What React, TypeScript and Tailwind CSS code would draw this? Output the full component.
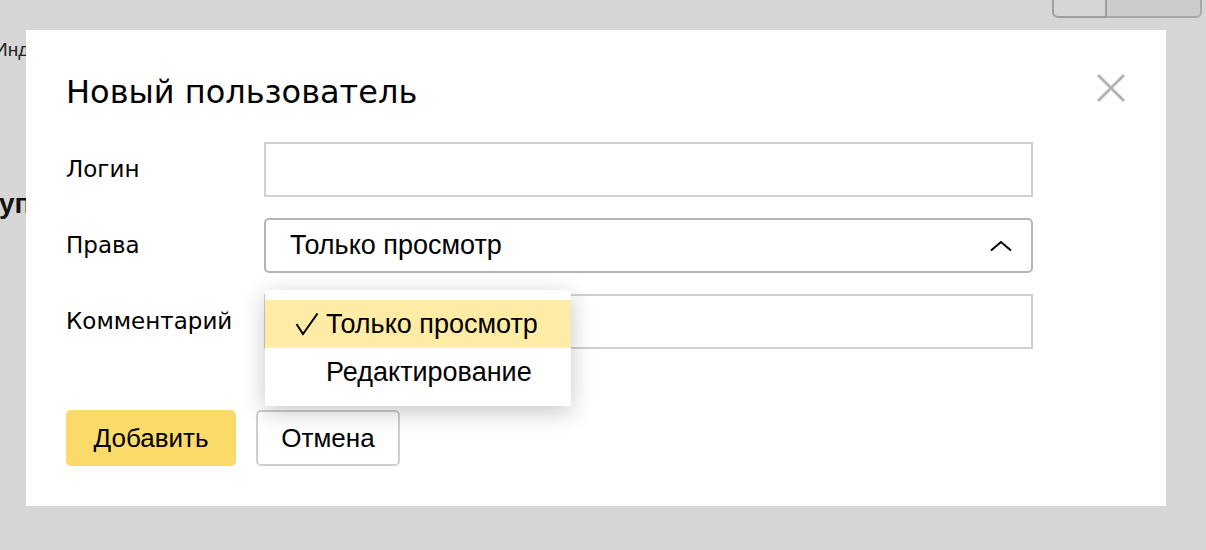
import React from "react";

const label = "w-[198px] shrink-0 text-[23px] text-black font-['DejaVu_Sans',sans-serif]";

function Row({ title, children }: { title: string; children: React.ReactNode }) {
  return (
    <div className="flex items-center h-[55px]">
      <div className={label}>{title}</div>
      <div className="w-[769px] h-full">{children}</div>
    </div>
  );
}

function Background() {
  return (
    <>
      <div className="absolute left-[-6px] top-[36px] text-[19px] text-[#222] font-['Liberation_Sans',sans-serif]">
        Индекс
      </div>
      <div className="absolute left-[-1px] top-[183px] text-[28px] font-semibold text-[#111] font-['Liberation_Sans',sans-serif]">
        уппы
      </div>
      <div className="absolute right-[4px] top-[-6px] flex h-[24px]">
        <div className="w-[55px] rounded-bl-[6px] border-2 border-[#9e9e9e] bg-[#d6d6d6]" />
        <div className="w-[95px] rounded-br-[6px] border-2 border-l-0 border-[#a8a8a8] bg-[#cbcbcb]" />
      </div>
    </>
  );
}

export default function App() {
  return (
    <div className="relative h-[550px] w-[1206px] overflow-hidden bg-[#d6d6d6] font-['Liberation_Sans',sans-serif]">
      <Background />
      <div className="absolute left-[26px] top-[30px] h-[476px] w-[1140px] bg-white pl-[40px] pt-[44px]">
        <button className="absolute right-[40px] top-[43px] h-[30px] w-[30px]">
          <svg viewBox="0 0 30 30" className="h-[30px] w-[30px]">
            <path d="M2 2 L28 28 M28 2 L2 28" stroke="#b3b3b3" strokeWidth="3" />
          </svg>
        </button>

        <h1 className="h-[36px] text-[32px] leading-[36px] text-black font-['DejaVu_Sans',sans-serif]">
          Новый пользователь
        </h1>

        <div className="mt-[32px] flex flex-col gap-[21px]">
          <Row title="Логин">
            <div className="h-full w-full border-2 border-[#d0d0d0]" />
          </Row>
          <Row title="Права">
            <div className="flex h-full w-full items-center justify-between rounded-[5px] border-2 border-[#b5b5b5] pl-[24px] pr-[18px] text-[27px] text-black">
              <span>Только просмотр</span>
              <svg viewBox="0 0 24 12" className="h-[12px] w-[24px]">
                <path d="M2 10.5 L12 2 L22 10.5" fill="none" stroke="#000" strokeWidth="2" />
              </svg>
            </div>
          </Row>
          <Row title="Комментарий">
            <div className="h-full w-full border-2 border-[#d0d0d0]" />
          </Row>
        </div>

        <div className="mt-[61px] flex gap-[20px]">
          <button className="h-[56px] w-[170px] rounded-[5px] bg-[#fadb69] text-[26px] text-black">
            Добавить
          </button>
          <button className="h-[56px] w-[144px] rounded-[5px] border-2 border-[#cfcfcf] bg-white text-[26px] text-black">
            Отмена
          </button>
        </div>

        <div className="absolute left-[239px] top-[260px] w-[306px] bg-white py-[10px] shadow-[0_6px_22px_rgba(0,0,0,0.22)]">
          <div className="flex h-[48px] items-center bg-[#fdeba6] text-[27px] text-black">
            <svg viewBox="0 0 24 24" className="ml-[30px] mr-[7px] h-[24px] w-[24px]">
              <path d="M1.5 12 L8 22 L22.5 1.5" fill="none" stroke="#000" strokeWidth="2" />
            </svg>
            <span>Только просмотр</span>
          </div>
          <div className="flex h-[48px] items-center pl-[61px] text-[27px] text-black">
            Редактирование
          </div>
        </div>
      </div>
    </div>
  );
}
